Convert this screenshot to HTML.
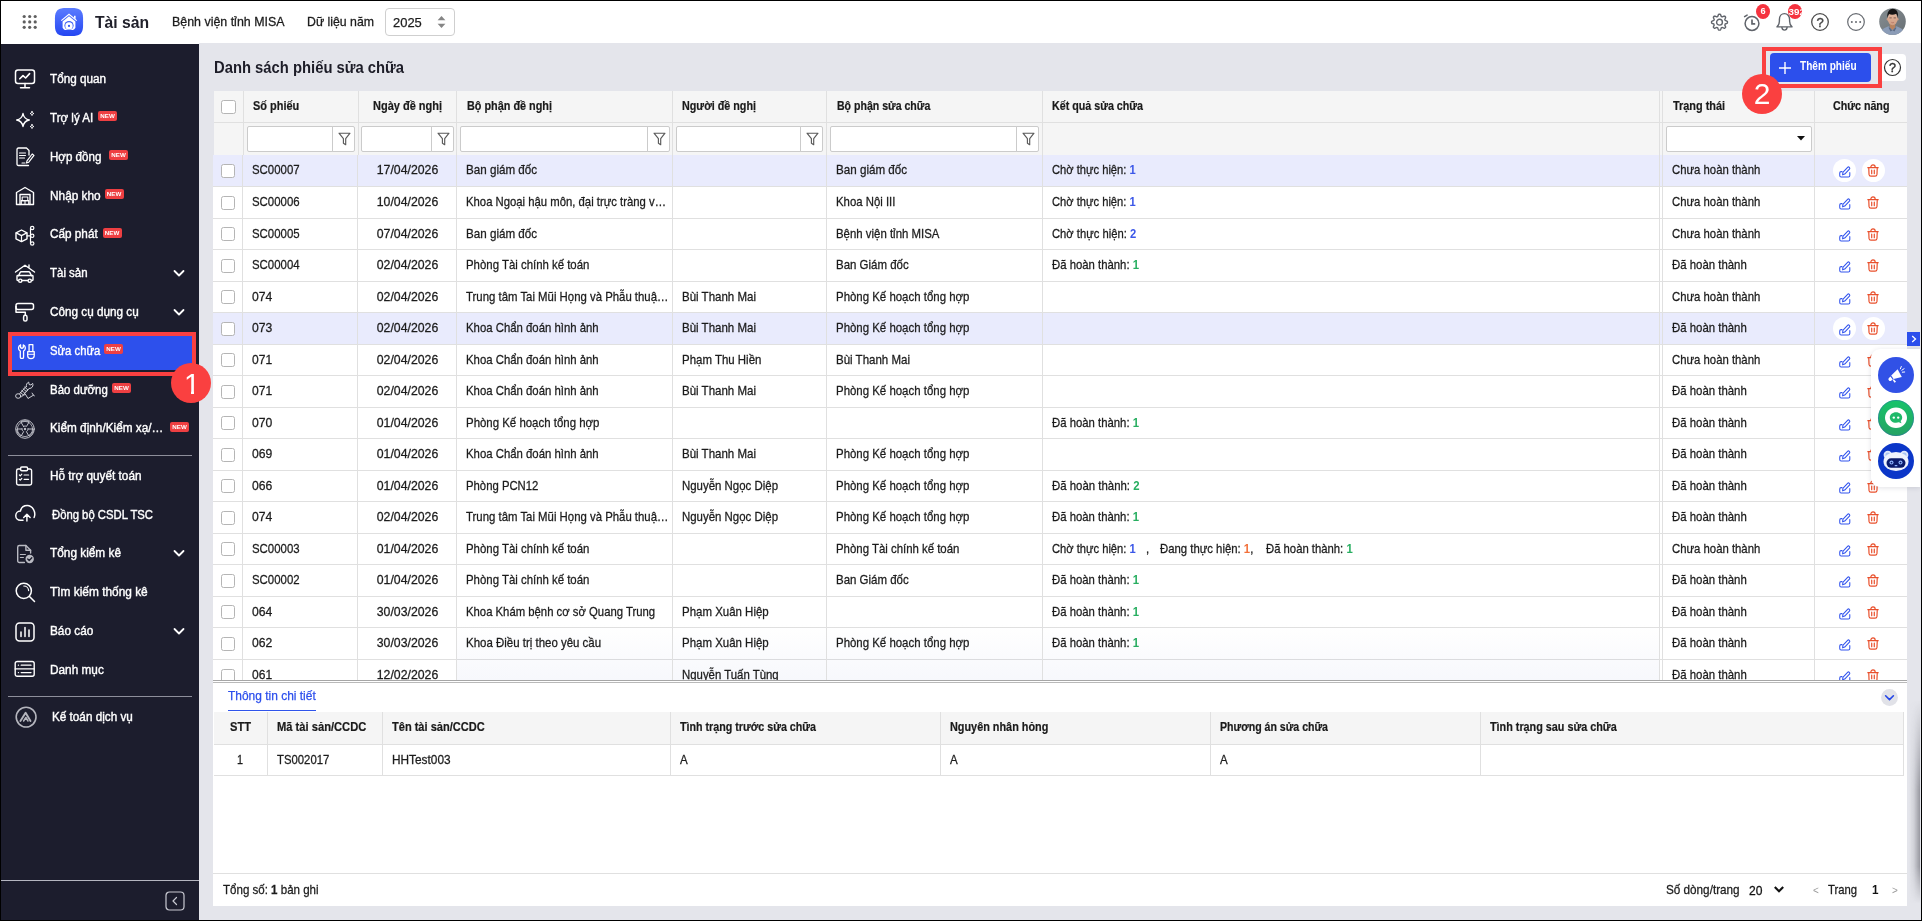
<!DOCTYPE html>
<html lang="vi"><head><meta charset="utf-8"><title>Danh sách phiếu sửa chữa</title>
<style>
*{box-sizing:border-box;margin:0;padding:0}
html,body{width:1922px;height:921px;overflow:hidden;background:#e4e5eb}
body{font-family:"Liberation Sans",sans-serif;font-size:13px;color:#1f1f1f;position:relative}
.abs{position:absolute}
.sx{display:inline-block;white-space:nowrap;transform-origin:0 50%}
.sxc{display:inline-block;white-space:nowrap;transform-origin:50% 50%}
svg{display:block;overflow:visible}
/* header */
#hdr{position:absolute;left:1px;top:1px;width:1920px;height:42px;background:#fff}
/* sidebar */
#side{position:absolute;left:1px;top:44px;width:198px;height:876px;background:#1c1d2d}
.mi{position:absolute;left:1px;width:198px;height:34px;color:#fff;font-size:12px;font-weight:normal;-webkit-text-stroke:.38px #fff}
.mi .ic{position:absolute;left:13px;top:6.8px;width:22px;height:22px}
.mi .tx{position:absolute;left:49px;top:0;line-height:34px;white-space:nowrap;transform:scaleX(.915);transform-origin:0 50%}
.new{position:absolute;width:19px;height:10px;border-radius:2px;background:#ee3f42;color:#fff;font-size:6.2px;line-height:10px;text-align:center;font-weight:bold}
.sep{position:absolute;left:8px;width:184px;height:1px;background:#8d8e9a}
/* table */
.th{position:absolute;top:91px;height:31px;line-height:30px;font-weight:bold;font-size:12px;color:#1a1a1a;-webkit-text-stroke:.2px #1a1a1a;white-space:nowrap}
.vl{position:absolute;width:1px;background:#e0e0e0}
.hl{position:absolute;height:1px;background:#e0e0e0}
.row{position:absolute;left:213px;width:1694px;background:#fff}
.row.sel{background:#e9ebfd}
.c{position:absolute;top:-1px;white-space:nowrap;color:#1c1c1c;-webkit-text-stroke:.28px #1c1c1c}
.c b{-webkit-text-stroke:0}
.cb{position:absolute;width:14px;height:14px;border:1px solid #b5b5b5;border-radius:2.5px;background:#fff}
.fin{position:absolute;top:126px;height:26px;background:#fff;border:1px solid #cbcbcb;border-radius:2px}
.fbtn{position:absolute;top:126px;height:26px;width:23px;background:#fff;border:1px solid #cbcbcb;border-radius:0 2px 2px 0}
.b{color:#3b57e8;font-weight:bold}.g{color:#27ae60;font-weight:bold}.o{color:#f2703a;font-weight:bold}
</style></head><body>
<!--HEADER-->
<div id="hdr"></div>
<svg class="abs" style="left:22px;top:14px" width="16" height="16" viewBox="0 0 16 16" fill="#5f5f5f"><circle cx="2.2" cy="2.5" r="1.6"/><circle cx="7.7" cy="2.5" r="1.6"/><circle cx="13.2" cy="2.5" r="1.6"/><circle cx="2.2" cy="7.9" r="1.6"/><circle cx="7.7" cy="7.9" r="1.6"/><circle cx="13.2" cy="7.9" r="1.6"/><circle cx="2.2" cy="13.3" r="1.6"/><circle cx="7.7" cy="13.3" r="1.6"/><circle cx="13.2" cy="13.3" r="1.6"/></svg>
<svg class="abs" style="left:55px;top:8px" width="28" height="28" viewBox="0 0 28 28"><defs><linearGradient id="lg1" x1="0" y1="0" x2="0" y2="1"><stop offset="0" stop-color="#5b7cff"/><stop offset="1" stop-color="#2446f2"/></linearGradient></defs><path d="M28.10 14.00 L28.07 17.63 L27.98 19.33 L27.83 20.65 L27.62 21.77 L27.35 22.74 L27.02 23.59 L26.62 24.35 L26.16 25.03 L25.63 25.63 L25.03 26.16 L24.35 26.62 L23.59 27.02 L22.74 27.35 L21.77 27.62 L20.65 27.83 L19.33 27.98 L17.63 28.07 L14.00 28.10 L10.37 28.07 L8.67 27.98 L7.35 27.83 L6.23 27.62 L5.26 27.35 L4.41 27.02 L3.65 26.62 L2.97 26.16 L2.37 25.63 L1.84 25.03 L1.38 24.35 L0.98 23.59 L0.65 22.74 L0.38 21.77 L0.17 20.65 L0.02 19.33 L-0.07 17.63 L-0.10 14.00 L-0.07 10.37 L0.02 8.67 L0.17 7.35 L0.38 6.23 L0.65 5.26 L0.98 4.41 L1.38 3.65 L1.84 2.97 L2.37 2.37 L2.97 1.84 L3.65 1.38 L4.41 0.98 L5.26 0.65 L6.23 0.38 L7.35 0.17 L8.67 0.02 L10.37 -0.07 L14.00 -0.10 L17.63 -0.07 L19.33 0.02 L20.65 0.17 L21.77 0.38 L22.74 0.65 L23.59 0.98 L24.35 1.38 L25.03 1.84 L25.63 2.37 L26.16 2.97 L26.62 3.65 L27.02 4.41 L27.35 5.26 L27.62 6.23 L27.83 7.35 L27.98 8.67 L28.07 10.37Z" fill="url(#lg1)"/><path d="M6.3 12.6 14 6.2l7.7 6.4" fill="none" stroke="#fff" stroke-width="1.2" stroke-linejoin="miter"/><path d="M7.6 13.6 14 8.3l6.4 5.3v6.1c-.6 1.2-1.6 2-2.6 2.4H10.2c-1-.4-2-1.2-2.6-2.4Z" fill="#fff"/><path d="M19 7.8h1.6v3.2L19 9.7Z" fill="#fff"/><circle cx="14" cy="17.6" r="4.6" fill="#3d60f6"/><circle cx="14" cy="17.9" r="3.7" fill="#fff"/><circle cx="14" cy="17.9" r="1.1" fill="#3357f3"/></svg>
<div class="abs" style="left:95px;top:11px;height:24px;line-height:24px;font-size:17px;font-weight:bold;color:#20202a"><span class="sx" style="transform:scaleX(.925)">Tài sản</span></div>
<div class="abs" style="left:171.7px;top:10px;height:24px;line-height:24px;font-size:13px;color:#1c1c1c;-webkit-text-stroke:.28px #1c1c1c"><span class="sx" style="transform:scaleX(.955)">Bệnh viện tỉnh MISA</span></div>
<div class="abs" style="left:306.8px;top:10px;height:24px;line-height:24px;font-size:13px;color:#1c1c1c;-webkit-text-stroke:.28px #1c1c1c"><span class="sx" style="transform:scaleX(.946)">Dữ liệu năm</span></div>
<div class="abs" style="left:385px;top:8px;width:70px;height:28px;border:1px solid #cfcfcf;border-radius:4px;background:#fff"></div>
<div class="abs" style="left:392.8px;top:10px;height:25px;line-height:25px;font-size:13.5px;color:#1c1c1c;-webkit-text-stroke:.25px #1c1c1c"><span class="sx" style="transform:scaleX(.96)">2025</span></div>
<svg class="abs" style="left:437px;top:15px" width="9" height="14" viewBox="0 0 9 14" fill="#858585"><path d="M.6 5.2 4.5 1 8.400 5.200Z"/><path d="M.600 8.800 4.500 13 8.400 8.800Z"/></svg>
<svg class="abs" style="left:1709px;top:12px" width="21" height="21" viewBox="0 0 21 21" fill="none" stroke="#60646b" stroke-width="1.4"><path d="M10.50 2.25 L10.81 2.26 L11.12 2.27 L11.42 2.45 L11.66 2.89 L11.86 3.38 L12.02 3.88 L12.16 4.33 L12.34 4.54 L12.56 4.62 L12.78 4.70 L12.99 4.80 L13.20 4.90 L13.48 4.88 L13.90 4.66 L14.36 4.42 L14.85 4.21 L15.33 4.07 L15.66 4.15 L15.90 4.36 L16.12 4.58 L16.34 4.80 L16.55 5.04 L16.63 5.37 L16.49 5.85 L16.28 6.34 L16.04 6.80 L15.82 7.22 L15.80 7.50 L15.90 7.71 L16.00 7.92 L16.08 8.14 L16.16 8.36 L16.37 8.54 L16.82 8.68 L17.32 8.84 L17.81 9.04 L18.25 9.28 L18.43 9.58 L18.44 9.89 L18.45 10.20 L18.44 10.51 L18.43 10.82 L18.25 11.12 L17.81 11.36 L17.32 11.56 L16.82 11.72 L16.37 11.86 L16.16 12.04 L16.08 12.26 L16.00 12.48 L15.90 12.69 L15.80 12.90 L15.82 13.18 L16.04 13.60 L16.28 14.06 L16.49 14.55 L16.63 15.03 L16.55 15.36 L16.34 15.60 L16.12 15.82 L15.90 16.04 L15.66 16.25 L15.33 16.33 L14.85 16.19 L14.36 15.98 L13.90 15.74 L13.48 15.52 L13.20 15.50 L12.99 15.60 L12.78 15.70 L12.56 15.78 L12.34 15.86 L12.16 16.07 L12.02 16.52 L11.86 17.02 L11.66 17.51 L11.42 17.95 L11.12 18.13 L10.81 18.14 L10.50 18.15 L10.19 18.14 L9.88 18.13 L9.58 17.95 L9.34 17.51 L9.14 17.02 L8.98 16.52 L8.84 16.07 L8.66 15.86 L8.44 15.78 L8.22 15.70 L8.01 15.60 L7.80 15.50 L7.52 15.52 L7.10 15.74 L6.64 15.98 L6.15 16.19 L5.67 16.33 L5.34 16.25 L5.10 16.04 L4.88 15.82 L4.66 15.60 L4.45 15.36 L4.37 15.03 L4.51 14.55 L4.72 14.06 L4.96 13.60 L5.18 13.18 L5.20 12.90 L5.10 12.69 L5.00 12.48 L4.92 12.26 L4.84 12.04 L4.63 11.86 L4.18 11.72 L3.68 11.56 L3.19 11.36 L2.75 11.12 L2.57 10.82 L2.56 10.51 L2.55 10.20 L2.56 9.89 L2.57 9.58 L2.75 9.28 L3.19 9.04 L3.68 8.84 L4.18 8.68 L4.63 8.54 L4.84 8.36 L4.92 8.14 L5.00 7.92 L5.10 7.71 L5.20 7.50 L5.18 7.22 L4.96 6.80 L4.72 6.34 L4.51 5.85 L4.37 5.37 L4.45 5.04 L4.66 4.80 L4.88 4.58 L5.10 4.36 L5.34 4.15 L5.67 4.07 L6.15 4.21 L6.64 4.42 L7.10 4.66 L7.52 4.88 L7.80 4.90 L8.01 4.80 L8.22 4.70 L8.44 4.62 L8.66 4.54 L8.84 4.33 L8.98 3.88 L9.14 3.38 L9.34 2.89 L9.58 2.45 L9.88 2.27 L10.19 2.26Z" stroke-linejoin="round"/><circle cx="10.5" cy="10.2" r="2.9"/></svg>
<svg class="abs" style="left:1742px;top:11.500px" width="20" height="22" viewBox="0 0 20 22" fill="none" stroke="#60646b" stroke-width="1.5" stroke-linecap="round"><circle cx="10" cy="11.5" r="6.9"/><path d="M10 8.200v3.700h2.500" stroke-width="1.700"/><path d="M2.6 4.6 5.1 3.1"/></svg>
<div class="abs" style="left:1756px;top:4px;width:14px;height:15px;border-radius:7px/7.5px;background:#f5333f;color:#fff;font-size:9.2px;line-height:15px;font-weight:bold;text-align:center">6</div>
<svg class="abs" style="left:1775px;top:12px" width="19" height="20" viewBox="0 0 19 20" fill="none" stroke="#60646b" stroke-width="1.4" stroke-linejoin="round" stroke-linecap="round"><path d="M2 14.9c1.7-1.4 2.4-3 2.4-5.6V7.6C4.4 4.2 6.6 1.6 9.5 1.6s5.1 2.6 5.1 6v1.7c0 2.6.7 4.2 2.4 5.6Z"/><path d="M6.900 15.400c.2 1.700 1.200 2.700 2.600 2.700s2.400-1 2.600-2.700"/></svg>
<div class="abs" style="left:1788px;top:4px;width:14px;height:15px;border-radius:7px/7.5px;background:#f5333f;color:#fff;font-size:9.2px;line-height:15px;font-weight:bold;text-align:center;overflow:hidden"><span style="display:block;text-align:left;margin-left:0.4px;letter-spacing:.1px;font-size:9.8px;white-space:nowrap">392</span></div>
<svg class="abs" style="left:1810px;top:12px" width="20" height="20" viewBox="0 0 20 20"><circle cx="10" cy="10" r="8.3" fill="none" stroke="#4d4d4d" stroke-width="1.3"/><text x="10" y="14.6" text-anchor="middle" font-family="Liberation Sans, sans-serif" font-size="13" fill="#444" stroke="#444" stroke-width=".4">?</text></svg>
<svg class="abs" style="left:1846px;top:12px" width="20" height="20" viewBox="0 0 20 20"><circle cx="10" cy="10" r="8.3" fill="none" stroke="#666a70" stroke-width="1.2"/><circle cx="5.8" cy="10" r="1" fill="#666a70"/><circle cx="10" cy="10" r="1" fill="#666a70"/><circle cx="14.2" cy="10" r="1" fill="#666a70"/></svg>
<svg class="abs" style="left:1879px;top:8.300px" width="27" height="27" viewBox="0 0 27 27"><defs><clipPath id="avc"><circle cx="13.500" cy="13.500" r="13.300"/></clipPath><linearGradient id="avg" x1="0" y1="0" x2="1" y2="1"><stop offset="0" stop-color="#868e92"/><stop offset="1" stop-color="#686f74"/></linearGradient><linearGradient id="avs" x1="0" y1="0" x2="0" y2="1"><stop offset="0" stop-color="#e3b8a0"/><stop offset="1" stop-color="#cf9d82"/></linearGradient></defs><g clip-path="url(#avc)"><rect width="27" height="27" fill="url(#avg)"/><path d="M1 27c.4-4.600 3.400-7.100 8.600-8.700l3.900 2.600 3.900-2.600c5.200 1.600 8.200 4.100 8.600 8.700Z" fill="#8b9cb7"/><path d="M10.800 16h5.400v3.400l-2.700 2.700-2.700-2.700Z" fill="#b8835f"/><path d="M10.500 19.200l3 3.300 3-3.300 1 .5-2.100 3.800-1.900-1.200-1.900 1.200-2.100-3.800Z" fill="#5d6b84"/><ellipse cx="13.600" cy="10.900" rx="5" ry="6.300" fill="url(#avs)"/><ellipse cx="8.500" cy="11.300" rx=".800" ry="1.300" fill="#d1a087"/><ellipse cx="18.700" cy="11.300" rx=".800" ry="1.300" fill="#d1a087"/><path d="M8.400 10.300C7.600 4.700 10 .700 13.800.700c3.800 0 6 3.600 5.100 9.600-.3-2.300-.9-3.700-1.700-4.500-2.200 1-5.200 1.100-7 .3-.9.900-1.500 2.300-1.800 4.200Z" fill="#171616"/><path d="M10.400 9.900h2.300M14.600 9.900h2.300" stroke="#5a4036" stroke-width=".700"/><path d="M12.300 14.400q1.300.6 2.600 0" stroke="#a9665a" stroke-width=".600" fill="none"/></g></svg>
<!--SIDEBAR-->
<div id="side"></div>
<div class="abs" style="left:1px;top:43px;width:198px;height:1px;background:#fff"></div>
<div class="abs" style="left:12px;top:336px;width:180px;height:34px;background:#2d50ec"></div>
<div class="mi" style="top:61.5px"><svg class="ic" viewBox="0 0 22 22"><g fill="none" stroke="#fff" stroke-linecap="round" stroke-linejoin="round" stroke-width="1.500"><rect x="1.5" y="2" width="19" height="13.5" rx="2.5"/><path d="M11 15.500v4M6.500 19.800h9"/><path d="M5.800 10.800 9 7.600l2.600 2.400 4-4.400" stroke-width="1.600"/></g></svg><span class="tx" style="left:48.9px;transform:scaleX(0.9758)">Tổng quan</span></div>
<div class="mi" style="top:101.2px"><svg class="ic" style="top:7.4px" viewBox="0 0 22 22"><g fill="none" stroke="#fff" stroke-linecap="round" stroke-linejoin="round" stroke-width="1.400"><path d="M9 4.500c.7 4 2.300 5.800 6.300 6.500-4 .7-5.600 2.500-6.300 6.500-.7-4-2.300-5.800-6.300-6.500 4-.7 5.600-2.500 6.300-6.500Z"/><path d="M18 2.500c.2 1.300.700 1.800 2 2-1.300.2-1.800.700-2 2-.2-1.300-.7-1.800-2-2 1.300-.2 1.800-.7 2-2ZM18 15.500c.2 1.300.700 1.800 2 2-1.300.2-1.800.700-2 2-.2-1.300-.7-1.800-2-2 1.300-.2 1.800-.7 2-2Z" stroke-width="1"/></g></svg><span class="tx" style="left:48.9px;transform:scaleX(0.965)">Trợ lý AI</span></div>
<div class="new" style="left:98px;top:111.2px">NEW</div>
<div class="mi" style="top:140.1px"><svg class="ic" style="top:6.0px" viewBox="0 0 22 22"><g fill="none" stroke="#fff" stroke-linecap="round" stroke-linejoin="round" stroke-width="1.300"><path d="M14.500 19.500H4.500c-1 0-1.500-.5-1.500-1.500V3.500C3 2.500 3.500 2 4.500 2h8L15 4.500V9"/><path d="M5.500 7h6M5.500 9.500h6M5.500 12h5M8 17h3" stroke-width="1.100"/><path d="M13 14.800 18.200 8l1.800 1.400-5.200 6.800-2.300.8Z" stroke-width="1.200"/></g></svg><span class="tx" style="left:48.9px;transform:scaleX(0.9653)">Hợp đồng</span></div>
<div class="new" style="left:109px;top:150.1px">NEW</div>
<div class="mi" style="top:179.2px"><svg class="ic" style="top:5.9px" viewBox="0 0 22 22"><g fill="none" stroke="#fff" stroke-linecap="round" stroke-linejoin="round" stroke-width="1.400"><path d="M2.500 19.500V7.500L11 2.500l8.500 5v12Z"/><path d="M6 19.500V9.500h10v10"/><rect x="8.200" y="12" width="5.600" height="3.600" stroke-width="1.100"/><path d="M7.300 19.500v-3.900h3.700v3.900M11 19.500v-3.900h3.700v3.900" stroke-width="1.100"/></g></svg><span class="tx" style="left:48.9px;transform:scaleX(0.9869)">Nhập kho</span></div>
<div class="new" style="left:104.5px;top:189.0px">NEW</div>
<div class="mi" style="top:217.2px"><svg class="ic" viewBox="0 0 22 22"><g fill="none" stroke="#fff" stroke-linecap="round" stroke-linejoin="round" stroke-width="1.400"><path d="M7.500 6 13 8.800v6L7.500 17.600 2 14.800v-6Z"/><path d="M2.200 8.900 7.500 11.600l5.300-2.700M7.500 11.600v5.800" stroke-width="1.200"/><path d="M13 11.800h3.500M16.500 4v15.500" stroke-width="1.200"/><circle cx="18.200" cy="4" r="1.700" stroke-width="1.200"/><circle cx="18.200" cy="11.800" r="1.700" stroke-width="1.200"/><circle cx="18.200" cy="19.500" r="1.700" stroke-width="1.200"/></g></svg><span class="tx" style="left:48.9px;transform:scaleX(0.9794)">Cấp phát</span></div>
<div class="new" style="left:102.5px;top:228.0px">NEW</div>
<div class="mi" style="top:255.6px"><svg class="ic" viewBox="0 0 22 22"><g fill="none" stroke="#fff" stroke-linecap="round" stroke-linejoin="round" stroke-width="1.400"><path d="M1.500 10 11 3.200 20.500 10M15 3v3"/><path d="M4.500 13.800 6.200 10.400c.2-.5.600-.7 1.100-.7h7.400c.5 0 .9.200 1.100.7l1.700 3.400"/><path d="M3 14.200c0-.4.300-.7.700-.7h14.600c.4 0 .7.300.7.700v3.600c0 .4-.3.700-.7.700H3.700c-.4 0-.7-.3-.7-.7Z"/><circle cx="6.300" cy="18.700" r="1.600" fill="#1c1d2d"/><circle cx="15.700" cy="18.700" r="1.600" fill="#1c1d2d"/></g></svg><span class="tx" style="left:48.9px;transform:scaleX(0.9553)">Tài sản</span><svg class="abs" style="left:172px;top:13.200px" width="12" height="9" viewBox="0 0 12 9" fill="none" stroke="#fff" stroke-width="1.800" stroke-linecap="round" stroke-linejoin="round"><path d="M1.500 2 6 6.500 10.500 2"/></svg></div>
<div class="mi" style="top:294.5px"><svg class="ic" viewBox="0 0 22 22"><g fill="none" stroke="#fff" stroke-linecap="round" stroke-linejoin="round" stroke-width="1.500"><rect x="2" y="2.500" width="17.500" height="6" rx="2"/><path d="M2 5.500v5.800h9.300v3"/><rect x="9.600" y="14.300" width="3.400" height="5.800" rx="1.700"/></g></svg><span class="tx" style="left:48.9px;transform:scaleX(0.9776)">Công cụ dụng cụ</span><svg class="abs" style="left:172px;top:13.200px" width="12" height="9" viewBox="0 0 12 9" fill="none" stroke="#fff" stroke-width="1.800" stroke-linecap="round" stroke-linejoin="round"><path d="M1.500 2 6 6.500 10.500 2"/></svg></div>
<div class="mi" style="top:333.6px"><svg class="ic" viewBox="0 0 22 22"><g fill="none" stroke="#fff" stroke-linecap="round" stroke-linejoin="round" stroke-width="1.500" transform="translate(3.2 1.6) scale(.86)"><path d="M5 19.500c-.9 0-1.400-.5-1.400-1.400V11C2.300 10.300 1.500 9 1.500 7.400c0-1.700 1-3.200 2.400-3.700V7l1.600.8L7.100 7V3.700c1.400.5 2.400 2 2.400 3.700 0 1.600-.8 2.900-2.100 3.600v7.100c0 .9-.5 1.400-1.400 1.400Z"/><path d="M13.800 3.400h4.400v8.200h-4.400ZM12.200 11.600h7.600v4.800c0 1.900-1.500 3.300-3.800 3.300s-3.800-1.400-3.800-3.300Z"/><path d="M12.300 14.800h7.400" stroke-width="1.100"/></g></svg><span class="tx" style="left:48.9px;transform:scaleX(0.9413)">Sửa chữa</span></div>
<div class="new" style="left:104px;top:344.4px">NEW</div>
<div class="mi" style="top:372.5px"><svg class="ic" viewBox="0 0 22 22"><g fill="none" stroke-linecap="round" stroke-linejoin="round" stroke="#d4d5dc" stroke-width=".950"><ellipse cx="4.200" cy="17" rx="2.600" ry="2.300"/><path d="M5.500 15 12 7.500M7.500 18 14 10.500M6.200 13.200l3 2.600M7.700 11.500l3 2.600M9.200 9.800l3 2.600M10.600 8.100l3 2.600"/><path d="M12.500 7.800c-.6-2 .3-3.900 2.200-4.700l.4 2.400 1.900.5 1.600-1.700c.8 1.800.2 3.900-1.600 4.800-.7.300-1.300.4-2 .3l-2.400 3.100"/><path d="M11.400 15.200l2.600 4.300 5.400-3.300-1.300-2.100M11.400 15.200l-1.600 1M19.400 16.200l1 .6" /></g></svg><span class="tx" style="left:48.9px;transform:scaleX(0.9536)">Bảo dưỡng</span></div>
<div class="new" style="left:112px;top:383.3px">NEW</div>
<div class="mi" style="top:411.4px"><svg class="ic" viewBox="0 0 22 22"><g fill="none" stroke-linecap="round" stroke-linejoin="round" stroke="#c2c3cb" stroke-width="1"><circle cx="11" cy="11" r="9.300"/><circle cx="11" cy="11" r="7.600" stroke-width=".8"/><circle cx="11" cy="11" r="1.200" fill="#c2c3cb" stroke="none"/><path d="M9.500 8.400 6.800 3.900c2.600-1.400 5.800-1.400 8.400 0L12.500 8.400c-1-.5-2-.5-3 0ZM14 11h5.200c0 3-1.600 5.700-4.200 7.200l-2.600-4.500c1-.6 1.600-1.600 1.600-2.700ZM8 11H2.800c0 3 1.600 5.700 4.200 7.200l2.600-4.500C8.600 13.100 8 12.100 8 11Z" stroke-width="1"/></g></svg><span class="tx" style="left:48.9px;transform:scaleX(0.9819)">Kiểm định/Kiểm xạ/…</span></div>
<div class="new" style="left:170px;top:422.2px">NEW</div>
<div class="mi" style="top:458.5px"><svg class="ic" viewBox="0 0 22 22"><g fill="none" stroke="#fff" stroke-linecap="round" stroke-linejoin="round" stroke-width="1.400" transform="translate(-.9 0)"><path d="M7.500 4H5.200C4.200 4 3.500 4.700 3.500 5.700v12.600c0 1 .7 1.700 1.700 1.700h11.600c1 0 1.700-.7 1.700-1.700V5.700c0-1-.7-1.700-1.700-1.700H14.500"/><rect x="7.500" y="2" width="7" height="3.800" rx="1.200"/><path d="M6.300 10l.9.900 1.500-1.700M11 10h4.500M6.300 14.300l.9.900 1.500-1.700M11 14.300h4.500" stroke-width="1.200"/></g></svg><span class="tx" style="left:48.9px;transform:scaleX(0.9811)">Hỗ trợ quyết toán</span></div>
<div class="mi" style="top:498.0px"><svg class="ic" viewBox="0 0 22 22"><g fill="none" stroke="#fff" stroke-linecap="round" stroke-linejoin="round" stroke-width="1.500" transform="translate(.3 -.4) scale(.97)"><path d="M20.400 13.300C22.600 8.300 19.200 1 13.300 1 9.600 1 7 3.400 6.300 6.700 3.400 6.900 1.500 9.100 1.500 11.500c0 2.700 2.100 4.700 4.800 4.700H9"/><path d="M13 16.900V10M9.700 13.200 13 9.900l3.300 3.300"/></g></svg><span class="tx" style="left:51.4px;transform:scaleX(0.9405)">Đồng bộ CSDL TSC</span></div>
<div class="mi" style="top:535.7px"><svg class="ic" viewBox="0 0 22 22"><g fill="none" stroke="#b9bac2" stroke-width="1.400" stroke-linecap="round" stroke-linejoin="round" transform="translate(.4 1)"><path d="M10 19.500H5c-1 0-1.700-.7-1.700-1.700V4.200c0-1 .7-1.700 1.700-1.700h6.500l4.700 4.700V10"/><path d="M11.500 2.500v4.700h4.700"/><path d="M6 11.500h5M6 14.500h3" stroke-width="1.200"/><circle cx="15.300" cy="16" r="4.200" fill="#b9bac2" stroke="none"/><path d="M13.300 16l1.500 1.500 2.600-2.800" stroke="#1c1d2d" stroke-width="1.300"/></g></svg><span class="tx" style="left:48.9px;transform:scaleX(0.9857)">Tổng kiểm kê</span><svg class="abs" style="left:172px;top:13.200px" width="12" height="9" viewBox="0 0 12 9" fill="none" stroke="#fff" stroke-width="1.800" stroke-linecap="round" stroke-linejoin="round"><path d="M1.500 2 6 6.500 10.500 2"/></svg></div>
<div class="mi" style="top:574.5px"><svg class="ic" viewBox="0 0 22 22"><g fill="none" stroke="#fff" stroke-linecap="round" stroke-linejoin="round" stroke-width="1.500"><circle cx="9.800" cy="9.800" r="7.600"/><path d="M15.500 15.500l5 5"/><path d="M9.800 5c2.600 0 4.700 2 4.800 4.600" stroke-width="1.200"/></g></svg><span class="tx" style="left:48.9px;transform:scaleX(0.9898)">Tìm kiếm thống kê</span></div>
<div class="mi" style="top:614.0px"><svg class="ic" viewBox="0 0 22 22"><g fill="none" stroke="#fff" stroke-linecap="round" stroke-linejoin="round" stroke-width="1.500"><rect x="2" y="2" width="18" height="18" rx="3.500"/><path d="M7 15.500v-4.500M11 15.500V6.500M15 15.500v-6.500"/></g></svg><span class="tx" style="left:48.9px;transform:scaleX(0.983)">Báo cáo</span><svg class="abs" style="left:172px;top:13.200px" width="12" height="9" viewBox="0 0 12 9" fill="none" stroke="#fff" stroke-width="1.800" stroke-linecap="round" stroke-linejoin="round"><path d="M1.500 2 6 6.500 10.500 2"/></svg></div>
<div class="mi" style="top:653.0px"><svg class="ic" viewBox="0 0 22 22"><g fill="none" stroke="#fff" stroke-linecap="round" stroke-linejoin="round" stroke-width="1.400"><rect x="1.200" y="1.500" width="19" height="14.800" rx="2"/><path d="M1.200 8.900h19"/><path d="M4.400 5.200h.1M7.200 5.200h9.800M4.400 12.600h.1M7.200 12.600h9.800" stroke-width="1.300"/></g></svg><span class="tx" style="left:48.9px;transform:scaleX(0.9835)">Danh mục</span></div>
<div class="mi" style="top:699.5px"><svg class="ic" viewBox="0 0 22 22"><g fill="none" stroke="#b4b5bd" stroke-width="1.600" stroke-linecap="round" stroke-linejoin="round"><circle cx="12.100" cy="11.100" r="9.900"/><path d="M6.400 15 11.600 6.800l4.900 8.200" stroke-width="1.900"/><path d="M9.600 15l2.300-3.500 2.100 3.500" stroke-width="1.500"/></g></svg><span class="tx" style="left:50.9px;transform:scaleX(0.9766)">Kế toán dịch vụ</span></div>
<div class="sep" style="top:455px"></div>
<div class="sep" style="top:696px"></div>
<div class="abs" style="left:1px;top:880px;width:198px;height:1px;background:#b5b6c0"></div>
<svg class="abs" style="left:165px;top:891px" width="20" height="20" viewBox="0 0 20 20" fill="none" stroke="#c9cad2" stroke-width="1.200" stroke-linecap="round" stroke-linejoin="round"><rect x="1" y="1" width="18" height="18" rx="3.500"/><path d="M11.500 6.500 8 10l3.500 3.500"/></svg>
<!--CONTENT TOP-->
<div class="abs" style="left:213.500px;top:56px;height:24px;line-height:24px;font-size:16px;font-weight:bold;color:#1d1d28"><span class="sx" style="transform:scaleX(.925)">Danh sách phiếu sửa chữa</span></div>
<div class="abs" style="left:1879px;top:54px;width:27px;height:27px;background:#fff;border-radius:4px"></div>
<svg class="abs" style="left:1883px;top:58px" width="19" height="19" viewBox="0 0 19 19"><circle cx="9.500" cy="9.500" r="8" fill="none" stroke="#333" stroke-width="1.200"/><text x="9.500" y="13.800" text-anchor="middle" font-family="Liberation Sans, sans-serif" font-size="12.500" fill="#333" stroke="#333" stroke-width=".4">?</text></svg>
<div class="abs" style="left:1770px;top:53px;width:101px;height:29px;background:#2c4fec;border-radius:4px"></div>
<svg class="abs" style="left:1779px;top:61.500px" width="12" height="12" viewBox="0 0 12 12" stroke="#fff" stroke-width="1.400" fill="none"><path d="M6 0v12M0 6h12"/></svg>
<div class="abs" style="left:1800px;top:55px;height:22px;line-height:22px;font-size:12px;font-weight:bold;color:#fff"><span class="sx" style="transform:scaleX(.84)">Thêm phiếu</span></div>
<!--TABLE-->
<div class="abs" style="left:214px;top:91px;width:1693px;height:64px;background:#f5f5f5"></div>
<div class="hl" style="left:214px;top:122px;width:1693px"></div>
<div class="th" style="left:252.8px"><span class="sx" style="transform:scaleX(0.9117)">Số phiếu</span></div>
<div class="th" style="left:373.0px"><span class="sx" style="transform:scaleX(0.9158)">Ngày đề nghị</span></div>
<div class="th" style="left:466.6px"><span class="sx" style="transform:scaleX(0.9043)">Bộ phận đề nghị</span></div>
<div class="th" style="left:682.4px"><span class="sx" style="transform:scaleX(0.8965)">Người đề nghị</span></div>
<div class="th" style="left:836.6px"><span class="sx" style="transform:scaleX(0.8795)">Bộ phận sửa chữa</span></div>
<div class="th" style="left:1052.2px"><span class="sx" style="transform:scaleX(0.8915)">Kết quả sửa chữa</span></div>
<div class="th" style="left:1672.9px"><span class="sx" style="transform:scaleX(0.9068)">Trạng thái</span></div>
<div class="th" style="left:1832.8px"><span class="sx" style="transform:scaleX(0.8902)">Chức năng</span></div>
<div class="cb" style="left:221px;top:100px;width:15px"></div>
<div class="fin" style="left:247px;width:87px;border-radius:2px 0 0 2px"></div><div class="fbtn" style="left:332px"></div><svg class="abs" style="left:337.5px;top:132px" width="13" height="14" viewBox="0 0 13 14" fill="none" stroke="#5a5a5a" stroke-width="1.150" stroke-linejoin="round"><path d="M1 1.200h11L7.700 6.700v6L5.400 11.200V6.700Z"/></svg>
<div class="fin" style="left:361px;width:72px;border-radius:2px 0 0 2px"></div><div class="fbtn" style="left:431px"></div><svg class="abs" style="left:436.5px;top:132px" width="13" height="14" viewBox="0 0 13 14" fill="none" stroke="#5a5a5a" stroke-width="1.150" stroke-linejoin="round"><path d="M1 1.200h11L7.700 6.700v6L5.400 11.200V6.700Z"/></svg>
<div class="fin" style="left:460px;width:189px;border-radius:2px 0 0 2px"></div><div class="fbtn" style="left:647px"></div><svg class="abs" style="left:652.5px;top:132px" width="13" height="14" viewBox="0 0 13 14" fill="none" stroke="#5a5a5a" stroke-width="1.150" stroke-linejoin="round"><path d="M1 1.200h11L7.700 6.700v6L5.400 11.200V6.700Z"/></svg>
<div class="fin" style="left:676px;width:126px;border-radius:2px 0 0 2px"></div><div class="fbtn" style="left:800px"></div><svg class="abs" style="left:805.5px;top:132px" width="13" height="14" viewBox="0 0 13 14" fill="none" stroke="#5a5a5a" stroke-width="1.150" stroke-linejoin="round"><path d="M1 1.200h11L7.700 6.700v6L5.400 11.200V6.700Z"/></svg>
<div class="fin" style="left:830px;width:188px;border-radius:2px 0 0 2px"></div><div class="fbtn" style="left:1016px"></div><svg class="abs" style="left:1021.5px;top:132px" width="13" height="14" viewBox="0 0 13 14" fill="none" stroke="#5a5a5a" stroke-width="1.150" stroke-linejoin="round"><path d="M1 1.200h11L7.700 6.700v6L5.400 11.200V6.700Z"/></svg>
<div class="fin" style="left:1666px;width:146px"></div>
<svg class="abs" style="left:1797px;top:136px" width="8" height="5" viewBox="0 0 8 5"><path d="M0 0h8L4 4.500Z" fill="#111"/></svg>
<div class="row sel" style="top:155px;height:32px;line-height:31.5px;overflow:hidden"><div class="cb" style="left:8px;top:9px"></div><div class="c" style="left:38.5px"><span class="sx" style="transform:scaleX(0.8779)">SC00007</span></div><div class="c" style="left:145.5px;width:98px;text-align:center"><span class="sxc" style="transform:scaleX(.945)">17/04/2026</span></div><div class="c" style="left:252.8px"><span class="sx" style="transform:scaleX(0.8943)">Ban giám đốc</span></div><div class="c" style="left:622.8px"><span class="sx" style="transform:scaleX(0.8943)">Ban giám đốc</span></div><div class="c" style="left:838.5px"><span class="sx" style="transform:scaleX(0.8589)">Chờ thực hiện: <b class=b>1</b></span></div><div class="c" style="left:1459.4px"><span class="sx" style="transform:scaleX(0.8722)">Chưa hoàn thành</span></div><div class="abs" style="left:1620px;top:4px;width:23px;height:23px;border-radius:12px;background:#fff"></div><div class="abs" style="left:1648.5px;top:4px;width:23px;height:23px;border-radius:12px;background:#fff"></div><svg class="abs" style="left:1625.8px;top:10.5px" width="12" height="12" viewBox="0 0 13 13" fill="none" stroke="#3355ee" stroke-width="1.150" stroke-linejoin="round" stroke-linecap="round"><path d="M3.300 6.100H2.300C1.400 6.100.800 6.700.800 7.600v2.800c0 .9.600 1.500 1.500 1.500h7.900c.9 0 1.500-.600 1.500-1.500V7.200"/><path d="M3.900 9.600 4.200 7 9.300 1.500c.5-.55 1.350-.55 1.900-.05s.6 1.350.1 1.900L6.200 8.800Z"/></svg>
<svg class="abs" style="left:1654.2px;top:9.3px" width="12" height="13" viewBox="0 0 13 14" fill="none" stroke="#e9502c" stroke-width="1.300" stroke-linejoin="round" stroke-linecap="round"><path d="M.900 3.900h11.200"/><path d="M4.100 3.700C4.100 2 5.100.900 6.500.900S8.900 2 8.900 3.700"/><path d="M1.900 4.100l.3 7.100c.1 1.200.8 1.900 2 1.900h4.600c1.200 0 1.900-.7 2-1.900l.3-7.100"/><path d="M5.100 6.600v3.800M7.900 6.600v3.800"/></svg>
<div class="hl" style="left:0;top:31px;width:1694px"></div></div>
<div class="row" style="top:187px;height:32px;line-height:31.5px;overflow:hidden"><div class="cb" style="left:8px;top:9px"></div><div class="c" style="left:38.5px"><span class="sx" style="transform:scaleX(0.8779)">SC00006</span></div><div class="c" style="left:145.5px;width:98px;text-align:center"><span class="sxc" style="transform:scaleX(.945)">10/04/2026</span></div><div class="c" style="left:252.8px"><span class="sx" style="transform:scaleX(0.8702)">Khoa Ngoại hậu môn, đại trực tràng v…</span></div><div class="c" style="left:622.8px"><span class="sx" style="transform:scaleX(0.8743)">Khoa Nội III</span></div><div class="c" style="left:838.5px"><span class="sx" style="transform:scaleX(0.8589)">Chờ thực hiện: <b class=b>1</b></span></div><div class="c" style="left:1459.4px"><span class="sx" style="transform:scaleX(0.8722)">Chưa hoàn thành</span></div><svg class="abs" style="left:1625.8px;top:10.5px" width="12" height="12" viewBox="0 0 13 13" fill="none" stroke="#3355ee" stroke-width="1.150" stroke-linejoin="round" stroke-linecap="round"><path d="M3.300 6.100H2.300C1.400 6.100.800 6.700.800 7.600v2.800c0 .9.600 1.500 1.500 1.500h7.900c.9 0 1.500-.600 1.500-1.500V7.200"/><path d="M3.900 9.600 4.200 7 9.300 1.500c.5-.55 1.350-.55 1.900-.05s.6 1.350.1 1.900L6.200 8.800Z"/></svg>
<svg class="abs" style="left:1654.2px;top:9.3px" width="12" height="13" viewBox="0 0 13 14" fill="none" stroke="#e9502c" stroke-width="1.300" stroke-linejoin="round" stroke-linecap="round"><path d="M.900 3.900h11.200"/><path d="M4.100 3.700C4.100 2 5.100.900 6.500.900S8.900 2 8.900 3.700"/><path d="M1.900 4.100l.3 7.100c.1 1.200.8 1.900 2 1.900h4.600c1.200 0 1.900-.7 2-1.900l.3-7.100"/><path d="M5.100 6.600v3.800M7.900 6.600v3.800"/></svg>
<div class="hl" style="left:0;top:31px;width:1694px"></div></div>
<div class="row" style="top:219px;height:31px;line-height:31.5px;overflow:hidden"><div class="cb" style="left:8px;top:8px"></div><div class="c" style="left:38.5px"><span class="sx" style="transform:scaleX(0.8779)">SC00005</span></div><div class="c" style="left:145.5px;width:98px;text-align:center"><span class="sxc" style="transform:scaleX(.945)">07/04/2026</span></div><div class="c" style="left:252.8px"><span class="sx" style="transform:scaleX(0.8943)">Ban giám đốc</span></div><div class="c" style="left:622.8px"><span class="sx" style="transform:scaleX(0.8778)">Bệnh viện tỉnh MISA</span></div><div class="c" style="left:838.5px"><span class="sx" style="transform:scaleX(0.864)">Chờ thực hiện: <b class=b>2</b></span></div><div class="c" style="left:1459.4px"><span class="sx" style="transform:scaleX(0.8722)">Chưa hoàn thành</span></div><svg class="abs" style="left:1625.8px;top:10.5px" width="12" height="12" viewBox="0 0 13 13" fill="none" stroke="#3355ee" stroke-width="1.150" stroke-linejoin="round" stroke-linecap="round"><path d="M3.300 6.100H2.300C1.400 6.100.800 6.700.800 7.600v2.800c0 .9.600 1.500 1.500 1.500h7.900c.9 0 1.500-.600 1.500-1.500V7.200"/><path d="M3.900 9.600 4.200 7 9.300 1.500c.5-.55 1.350-.55 1.900-.05s.6 1.350.1 1.900L6.200 8.800Z"/></svg>
<svg class="abs" style="left:1654.2px;top:9.3px" width="12" height="13" viewBox="0 0 13 14" fill="none" stroke="#e9502c" stroke-width="1.300" stroke-linejoin="round" stroke-linecap="round"><path d="M.900 3.900h11.200"/><path d="M4.100 3.700C4.100 2 5.100.900 6.500.900S8.900 2 8.900 3.700"/><path d="M1.900 4.100l.3 7.100c.1 1.200.8 1.900 2 1.900h4.600c1.200 0 1.900-.7 2-1.900l.3-7.100"/><path d="M5.100 6.600v3.800M7.900 6.600v3.800"/></svg>
<div class="hl" style="left:0;top:30px;width:1694px"></div></div>
<div class="row" style="top:250px;height:32px;line-height:31.5px;overflow:hidden"><div class="cb" style="left:8px;top:9px"></div><div class="c" style="left:38.5px"><span class="sx" style="transform:scaleX(0.8779)">SC00004</span></div><div class="c" style="left:145.5px;width:98px;text-align:center"><span class="sxc" style="transform:scaleX(.945)">02/04/2026</span></div><div class="c" style="left:252.8px"><span class="sx" style="transform:scaleX(0.877)">Phòng Tài chính kế toán</span></div><div class="c" style="left:622.8px"><span class="sx" style="transform:scaleX(0.8825)">Ban Giám đốc</span></div><div class="c" style="left:838.5px"><span class="sx" style="transform:scaleX(0.872)">Đã hoàn thành: <b class=g>1</b></span></div><div class="c" style="left:1459.4px"><span class="sx" style="transform:scaleX(0.8769)">Đã hoàn thành</span></div><svg class="abs" style="left:1625.8px;top:10.5px" width="12" height="12" viewBox="0 0 13 13" fill="none" stroke="#3355ee" stroke-width="1.150" stroke-linejoin="round" stroke-linecap="round"><path d="M3.300 6.100H2.300C1.400 6.100.800 6.700.800 7.600v2.800c0 .9.600 1.500 1.500 1.500h7.900c.9 0 1.500-.600 1.500-1.500V7.200"/><path d="M3.900 9.600 4.200 7 9.300 1.500c.5-.55 1.350-.55 1.900-.05s.6 1.350.1 1.900L6.200 8.800Z"/></svg>
<svg class="abs" style="left:1654.2px;top:9.3px" width="12" height="13" viewBox="0 0 13 14" fill="none" stroke="#e9502c" stroke-width="1.300" stroke-linejoin="round" stroke-linecap="round"><path d="M.900 3.900h11.200"/><path d="M4.100 3.700C4.100 2 5.100.900 6.500.900S8.900 2 8.900 3.700"/><path d="M1.900 4.100l.3 7.100c.1 1.200.8 1.900 2 1.900h4.600c1.200 0 1.900-.7 2-1.900l.3-7.100"/><path d="M5.100 6.600v3.800M7.900 6.600v3.800"/></svg>
<div class="hl" style="left:0;top:31px;width:1694px"></div></div>
<div class="row" style="top:282px;height:31px;line-height:31.5px;overflow:hidden"><div class="cb" style="left:8px;top:8px"></div><div class="c" style="left:38.5px"><span class="sx" style="transform:scaleX(0.9353)">074</span></div><div class="c" style="left:145.5px;width:98px;text-align:center"><span class="sxc" style="transform:scaleX(.945)">02/04/2026</span></div><div class="c" style="left:252.8px"><span class="sx" style="transform:scaleX(0.8753)">Trung tâm Tai Mũi Họng và Phẫu thuậ…</span></div><div class="c" style="left:468.5px"><span class="sx" style="transform:scaleX(0.8852)">Bùi Thanh Mai</span></div><div class="c" style="left:622.8px"><span class="sx" style="transform:scaleX(0.8796)">Phòng Kế hoạch tổng hợp</span></div><div class="c" style="left:1459.4px"><span class="sx" style="transform:scaleX(0.8722)">Chưa hoàn thành</span></div><svg class="abs" style="left:1625.8px;top:10.5px" width="12" height="12" viewBox="0 0 13 13" fill="none" stroke="#3355ee" stroke-width="1.150" stroke-linejoin="round" stroke-linecap="round"><path d="M3.300 6.100H2.300C1.400 6.100.800 6.700.800 7.600v2.800c0 .9.600 1.500 1.500 1.500h7.900c.9 0 1.500-.600 1.500-1.500V7.200"/><path d="M3.900 9.600 4.200 7 9.300 1.500c.5-.55 1.350-.55 1.900-.05s.6 1.350.1 1.900L6.200 8.800Z"/></svg>
<svg class="abs" style="left:1654.2px;top:9.3px" width="12" height="13" viewBox="0 0 13 14" fill="none" stroke="#e9502c" stroke-width="1.300" stroke-linejoin="round" stroke-linecap="round"><path d="M.900 3.900h11.200"/><path d="M4.100 3.700C4.100 2 5.100.900 6.500.900S8.900 2 8.900 3.700"/><path d="M1.900 4.100l.3 7.100c.1 1.200.8 1.900 2 1.900h4.600c1.200 0 1.900-.7 2-1.900l.3-7.100"/><path d="M5.100 6.600v3.800M7.900 6.600v3.800"/></svg>
<div class="hl" style="left:0;top:30px;width:1694px"></div></div>
<div class="row sel" style="top:313px;height:32px;line-height:31.5px;overflow:hidden"><div class="cb" style="left:8px;top:9px"></div><div class="c" style="left:38.5px"><span class="sx" style="transform:scaleX(0.9353)">073</span></div><div class="c" style="left:145.5px;width:98px;text-align:center"><span class="sxc" style="transform:scaleX(.945)">02/04/2026</span></div><div class="c" style="left:252.8px"><span class="sx" style="transform:scaleX(0.8741)">Khoa Chẩn đoán hình ảnh</span></div><div class="c" style="left:468.5px"><span class="sx" style="transform:scaleX(0.8852)">Bùi Thanh Mai</span></div><div class="c" style="left:622.8px"><span class="sx" style="transform:scaleX(0.8796)">Phòng Kế hoạch tổng hợp</span></div><div class="c" style="left:1459.4px"><span class="sx" style="transform:scaleX(0.8769)">Đã hoàn thành</span></div><div class="abs" style="left:1620px;top:4px;width:23px;height:23px;border-radius:12px;background:#fff"></div><div class="abs" style="left:1648.5px;top:4px;width:23px;height:23px;border-radius:12px;background:#fff"></div><svg class="abs" style="left:1625.8px;top:10.5px" width="12" height="12" viewBox="0 0 13 13" fill="none" stroke="#3355ee" stroke-width="1.150" stroke-linejoin="round" stroke-linecap="round"><path d="M3.300 6.100H2.300C1.400 6.100.800 6.700.800 7.600v2.800c0 .9.600 1.500 1.500 1.500h7.900c.9 0 1.500-.600 1.500-1.500V7.200"/><path d="M3.900 9.600 4.200 7 9.300 1.500c.5-.55 1.350-.55 1.900-.05s.6 1.350.1 1.900L6.200 8.800Z"/></svg>
<svg class="abs" style="left:1654.2px;top:9.3px" width="12" height="13" viewBox="0 0 13 14" fill="none" stroke="#e9502c" stroke-width="1.300" stroke-linejoin="round" stroke-linecap="round"><path d="M.900 3.900h11.200"/><path d="M4.100 3.700C4.100 2 5.100.900 6.500.900S8.900 2 8.900 3.700"/><path d="M1.900 4.100l.3 7.100c.1 1.200.8 1.900 2 1.900h4.600c1.200 0 1.900-.7 2-1.900l.3-7.100"/><path d="M5.100 6.600v3.800M7.900 6.600v3.800"/></svg>
<div class="hl" style="left:0;top:31px;width:1694px"></div></div>
<div class="row" style="top:345px;height:31px;line-height:31.5px;overflow:hidden"><div class="cb" style="left:8px;top:8px"></div><div class="c" style="left:38.5px"><span class="sx" style="transform:scaleX(0.9261)">071</span></div><div class="c" style="left:145.5px;width:98px;text-align:center"><span class="sxc" style="transform:scaleX(.945)">02/04/2026</span></div><div class="c" style="left:252.8px"><span class="sx" style="transform:scaleX(0.8741)">Khoa Chẩn đoán hình ảnh</span></div><div class="c" style="left:468.5px"><span class="sx" style="transform:scaleX(0.8813)">Phạm Thu Hiền</span></div><div class="c" style="left:622.8px"><span class="sx" style="transform:scaleX(0.8852)">Bùi Thanh Mai</span></div><div class="c" style="left:1459.4px"><span class="sx" style="transform:scaleX(0.8722)">Chưa hoàn thành</span></div><svg class="abs" style="left:1625.8px;top:10.5px" width="12" height="12" viewBox="0 0 13 13" fill="none" stroke="#3355ee" stroke-width="1.150" stroke-linejoin="round" stroke-linecap="round"><path d="M3.300 6.100H2.300C1.400 6.100.800 6.700.800 7.600v2.800c0 .9.600 1.500 1.500 1.500h7.900c.9 0 1.500-.600 1.500-1.500V7.200"/><path d="M3.900 9.600 4.200 7 9.300 1.500c.5-.55 1.350-.55 1.900-.05s.6 1.350.1 1.900L6.200 8.800Z"/></svg>
<svg class="abs" style="left:1654.2px;top:9.3px" width="12" height="13" viewBox="0 0 13 14" fill="none" stroke="#e9502c" stroke-width="1.300" stroke-linejoin="round" stroke-linecap="round"><path d="M.900 3.900h11.200"/><path d="M4.100 3.700C4.100 2 5.100.900 6.500.900S8.900 2 8.900 3.700"/><path d="M1.900 4.100l.3 7.100c.1 1.200.8 1.900 2 1.900h4.600c1.200 0 1.900-.7 2-1.900l.3-7.100"/><path d="M5.100 6.600v3.800M7.900 6.600v3.800"/></svg>
<div class="hl" style="left:0;top:30px;width:1694px"></div></div>
<div class="row" style="top:376px;height:32px;line-height:31.5px;overflow:hidden"><div class="cb" style="left:8px;top:9px"></div><div class="c" style="left:38.5px"><span class="sx" style="transform:scaleX(0.9261)">071</span></div><div class="c" style="left:145.5px;width:98px;text-align:center"><span class="sxc" style="transform:scaleX(.945)">02/04/2026</span></div><div class="c" style="left:252.8px"><span class="sx" style="transform:scaleX(0.8741)">Khoa Chẩn đoán hình ảnh</span></div><div class="c" style="left:468.5px"><span class="sx" style="transform:scaleX(0.8852)">Bùi Thanh Mai</span></div><div class="c" style="left:622.8px"><span class="sx" style="transform:scaleX(0.8796)">Phòng Kế hoạch tổng hợp</span></div><div class="c" style="left:1459.4px"><span class="sx" style="transform:scaleX(0.8769)">Đã hoàn thành</span></div><svg class="abs" style="left:1625.8px;top:10.5px" width="12" height="12" viewBox="0 0 13 13" fill="none" stroke="#3355ee" stroke-width="1.150" stroke-linejoin="round" stroke-linecap="round"><path d="M3.300 6.100H2.300C1.400 6.100.800 6.700.800 7.600v2.800c0 .9.600 1.500 1.500 1.500h7.900c.9 0 1.500-.600 1.500-1.500V7.200"/><path d="M3.900 9.600 4.200 7 9.300 1.500c.5-.55 1.350-.55 1.900-.05s.6 1.350.1 1.900L6.200 8.800Z"/></svg>
<svg class="abs" style="left:1654.2px;top:9.3px" width="12" height="13" viewBox="0 0 13 14" fill="none" stroke="#e9502c" stroke-width="1.300" stroke-linejoin="round" stroke-linecap="round"><path d="M.900 3.900h11.200"/><path d="M4.100 3.700C4.100 2 5.100.900 6.500.900S8.900 2 8.900 3.700"/><path d="M1.900 4.100l.3 7.100c.1 1.200.8 1.900 2 1.900h4.600c1.200 0 1.900-.7 2-1.900l.3-7.100"/><path d="M5.100 6.600v3.800M7.900 6.600v3.800"/></svg>
<div class="hl" style="left:0;top:31px;width:1694px"></div></div>
<div class="row" style="top:408px;height:31px;line-height:31.5px;overflow:hidden"><div class="cb" style="left:8px;top:8px"></div><div class="c" style="left:38.5px"><span class="sx" style="transform:scaleX(0.9353)">070</span></div><div class="c" style="left:145.5px;width:98px;text-align:center"><span class="sxc" style="transform:scaleX(.945)">01/04/2026</span></div><div class="c" style="left:252.8px"><span class="sx" style="transform:scaleX(0.8796)">Phòng Kế hoạch tổng hợp</span></div><div class="c" style="left:838.5px"><span class="sx" style="transform:scaleX(0.872)">Đã hoàn thành: <b class=g>1</b></span></div><div class="c" style="left:1459.4px"><span class="sx" style="transform:scaleX(0.8769)">Đã hoàn thành</span></div><svg class="abs" style="left:1625.8px;top:10.5px" width="12" height="12" viewBox="0 0 13 13" fill="none" stroke="#3355ee" stroke-width="1.150" stroke-linejoin="round" stroke-linecap="round"><path d="M3.300 6.100H2.300C1.400 6.100.800 6.700.800 7.600v2.800c0 .9.600 1.500 1.500 1.500h7.900c.9 0 1.500-.600 1.500-1.500V7.200"/><path d="M3.900 9.600 4.200 7 9.300 1.500c.5-.55 1.350-.55 1.900-.05s.6 1.350.1 1.900L6.200 8.800Z"/></svg>
<svg class="abs" style="left:1654.2px;top:9.3px" width="12" height="13" viewBox="0 0 13 14" fill="none" stroke="#e9502c" stroke-width="1.300" stroke-linejoin="round" stroke-linecap="round"><path d="M.900 3.900h11.200"/><path d="M4.100 3.700C4.100 2 5.100.900 6.500.900S8.900 2 8.900 3.700"/><path d="M1.900 4.100l.3 7.100c.1 1.200.8 1.900 2 1.900h4.600c1.200 0 1.900-.7 2-1.900l.3-7.100"/><path d="M5.100 6.600v3.800M7.900 6.600v3.800"/></svg>
<div class="hl" style="left:0;top:30px;width:1694px"></div></div>
<div class="row" style="top:439px;height:32px;line-height:31.5px;overflow:hidden"><div class="cb" style="left:8px;top:9px"></div><div class="c" style="left:38.5px"><span class="sx" style="transform:scaleX(0.9353)">069</span></div><div class="c" style="left:145.5px;width:98px;text-align:center"><span class="sxc" style="transform:scaleX(.945)">01/04/2026</span></div><div class="c" style="left:252.8px"><span class="sx" style="transform:scaleX(0.8741)">Khoa Chẩn đoán hình ảnh</span></div><div class="c" style="left:468.5px"><span class="sx" style="transform:scaleX(0.8852)">Bùi Thanh Mai</span></div><div class="c" style="left:622.8px"><span class="sx" style="transform:scaleX(0.8796)">Phòng Kế hoạch tổng hợp</span></div><div class="c" style="left:1459.4px"><span class="sx" style="transform:scaleX(0.8769)">Đã hoàn thành</span></div><svg class="abs" style="left:1625.8px;top:10.5px" width="12" height="12" viewBox="0 0 13 13" fill="none" stroke="#3355ee" stroke-width="1.150" stroke-linejoin="round" stroke-linecap="round"><path d="M3.300 6.100H2.300C1.400 6.100.800 6.700.800 7.600v2.800c0 .9.600 1.500 1.500 1.500h7.900c.9 0 1.500-.600 1.500-1.500V7.200"/><path d="M3.900 9.600 4.200 7 9.300 1.500c.5-.55 1.350-.55 1.900-.05s.6 1.350.1 1.900L6.200 8.800Z"/></svg>
<svg class="abs" style="left:1654.2px;top:9.3px" width="12" height="13" viewBox="0 0 13 14" fill="none" stroke="#e9502c" stroke-width="1.300" stroke-linejoin="round" stroke-linecap="round"><path d="M.900 3.900h11.200"/><path d="M4.100 3.700C4.100 2 5.100.900 6.500.900S8.900 2 8.900 3.700"/><path d="M1.900 4.100l.3 7.100c.1 1.200.8 1.900 2 1.900h4.600c1.200 0 1.900-.7 2-1.900l.3-7.100"/><path d="M5.100 6.600v3.800M7.900 6.600v3.800"/></svg>
<div class="hl" style="left:0;top:31px;width:1694px"></div></div>
<div class="row" style="top:471px;height:31px;line-height:31.5px;overflow:hidden"><div class="cb" style="left:8px;top:8px"></div><div class="c" style="left:38.5px"><span class="sx" style="transform:scaleX(0.9353)">066</span></div><div class="c" style="left:145.5px;width:98px;text-align:center"><span class="sxc" style="transform:scaleX(.945)">01/04/2026</span></div><div class="c" style="left:252.8px"><span class="sx" style="transform:scaleX(0.871)">Phòng PCN12</span></div><div class="c" style="left:468.5px"><span class="sx" style="transform:scaleX(0.8797)">Nguyễn Ngọc Diệp</span></div><div class="c" style="left:622.8px"><span class="sx" style="transform:scaleX(0.8796)">Phòng Kế hoạch tổng hợp</span></div><div class="c" style="left:838.5px"><span class="sx" style="transform:scaleX(0.8771)">Đã hoàn thành: <b class=g>2</b></span></div><div class="c" style="left:1459.4px"><span class="sx" style="transform:scaleX(0.8769)">Đã hoàn thành</span></div><svg class="abs" style="left:1625.8px;top:10.5px" width="12" height="12" viewBox="0 0 13 13" fill="none" stroke="#3355ee" stroke-width="1.150" stroke-linejoin="round" stroke-linecap="round"><path d="M3.300 6.100H2.300C1.400 6.100.800 6.700.800 7.600v2.800c0 .9.600 1.500 1.500 1.500h7.900c.9 0 1.500-.600 1.500-1.500V7.200"/><path d="M3.900 9.600 4.200 7 9.300 1.500c.5-.55 1.350-.55 1.900-.05s.6 1.350.1 1.900L6.200 8.800Z"/></svg>
<svg class="abs" style="left:1654.2px;top:9.3px" width="12" height="13" viewBox="0 0 13 14" fill="none" stroke="#e9502c" stroke-width="1.300" stroke-linejoin="round" stroke-linecap="round"><path d="M.900 3.900h11.200"/><path d="M4.100 3.700C4.100 2 5.100.900 6.500.900S8.900 2 8.900 3.700"/><path d="M1.900 4.100l.3 7.100c.1 1.200.8 1.900 2 1.900h4.600c1.200 0 1.900-.7 2-1.900l.3-7.100"/><path d="M5.100 6.600v3.800M7.900 6.600v3.800"/></svg>
<div class="hl" style="left:0;top:30px;width:1694px"></div></div>
<div class="row" style="top:502px;height:32px;line-height:31.5px;overflow:hidden"><div class="cb" style="left:8px;top:9px"></div><div class="c" style="left:38.5px"><span class="sx" style="transform:scaleX(0.9353)">074</span></div><div class="c" style="left:145.5px;width:98px;text-align:center"><span class="sxc" style="transform:scaleX(.945)">02/04/2026</span></div><div class="c" style="left:252.8px"><span class="sx" style="transform:scaleX(0.8753)">Trung tâm Tai Mũi Họng và Phẫu thuậ…</span></div><div class="c" style="left:468.5px"><span class="sx" style="transform:scaleX(0.8797)">Nguyễn Ngọc Diệp</span></div><div class="c" style="left:622.8px"><span class="sx" style="transform:scaleX(0.8796)">Phòng Kế hoạch tổng hợp</span></div><div class="c" style="left:838.5px"><span class="sx" style="transform:scaleX(0.872)">Đã hoàn thành: <b class=g>1</b></span></div><div class="c" style="left:1459.4px"><span class="sx" style="transform:scaleX(0.8769)">Đã hoàn thành</span></div><svg class="abs" style="left:1625.8px;top:10.5px" width="12" height="12" viewBox="0 0 13 13" fill="none" stroke="#3355ee" stroke-width="1.150" stroke-linejoin="round" stroke-linecap="round"><path d="M3.300 6.100H2.300C1.400 6.100.800 6.700.800 7.600v2.800c0 .9.600 1.500 1.500 1.500h7.900c.9 0 1.500-.600 1.500-1.500V7.200"/><path d="M3.900 9.600 4.200 7 9.300 1.500c.5-.55 1.350-.55 1.900-.05s.6 1.350.1 1.900L6.200 8.800Z"/></svg>
<svg class="abs" style="left:1654.2px;top:9.3px" width="12" height="13" viewBox="0 0 13 14" fill="none" stroke="#e9502c" stroke-width="1.300" stroke-linejoin="round" stroke-linecap="round"><path d="M.900 3.900h11.200"/><path d="M4.100 3.700C4.100 2 5.100.900 6.500.900S8.900 2 8.900 3.700"/><path d="M1.900 4.100l.3 7.100c.1 1.200.8 1.900 2 1.900h4.600c1.200 0 1.900-.7 2-1.900l.3-7.100"/><path d="M5.100 6.600v3.800M7.900 6.600v3.800"/></svg>
<div class="hl" style="left:0;top:31px;width:1694px"></div></div>
<div class="row" style="top:534px;height:31px;line-height:31.5px;overflow:hidden"><div class="cb" style="left:8px;top:8px"></div><div class="c" style="left:38.5px"><span class="sx" style="transform:scaleX(0.8779)">SC00003</span></div><div class="c" style="left:145.5px;width:98px;text-align:center"><span class="sxc" style="transform:scaleX(.945)">01/04/2026</span></div><div class="c" style="left:252.8px"><span class="sx" style="transform:scaleX(0.877)">Phòng Tài chính kế toán</span></div><div class="c" style="left:622.8px"><span class="sx" style="transform:scaleX(0.877)">Phòng Tài chính kế toán</span></div><div class="c" style="left:838.5px"><span class="sx" style="transform:scaleX(0.8589)">Chờ thực hiện: <b class=b>1</b></span></div><div class="c" style="left:933px"><span class="sx" style="transform:scaleX(0.885)">,</span></div><div class="c" style="left:947px"><span class="sx" style="transform:scaleX(0.8718)">Đang thực hiện: <b class=o>1</b>,</span></div><div class="c" style="left:1052.5px"><span class="sx" style="transform:scaleX(0.869)">Đã hoàn thành: <b class=g>1</b></span></div><div class="c" style="left:1459.4px"><span class="sx" style="transform:scaleX(0.8722)">Chưa hoàn thành</span></div><svg class="abs" style="left:1625.8px;top:10.5px" width="12" height="12" viewBox="0 0 13 13" fill="none" stroke="#3355ee" stroke-width="1.150" stroke-linejoin="round" stroke-linecap="round"><path d="M3.300 6.100H2.300C1.400 6.100.800 6.700.800 7.600v2.800c0 .9.600 1.500 1.500 1.500h7.900c.9 0 1.500-.600 1.500-1.500V7.200"/><path d="M3.900 9.600 4.200 7 9.300 1.500c.5-.55 1.350-.55 1.900-.05s.6 1.350.1 1.900L6.200 8.800Z"/></svg>
<svg class="abs" style="left:1654.2px;top:9.3px" width="12" height="13" viewBox="0 0 13 14" fill="none" stroke="#e9502c" stroke-width="1.300" stroke-linejoin="round" stroke-linecap="round"><path d="M.900 3.900h11.200"/><path d="M4.100 3.700C4.100 2 5.100.900 6.500.900S8.900 2 8.900 3.700"/><path d="M1.900 4.100l.3 7.100c.1 1.200.8 1.900 2 1.900h4.600c1.200 0 1.900-.7 2-1.900l.3-7.100"/><path d="M5.100 6.600v3.800M7.900 6.600v3.800"/></svg>
<div class="hl" style="left:0;top:30px;width:1694px"></div></div>
<div class="row" style="top:565px;height:32px;line-height:31.5px;overflow:hidden"><div class="cb" style="left:8px;top:9px"></div><div class="c" style="left:38.5px"><span class="sx" style="transform:scaleX(0.8779)">SC00002</span></div><div class="c" style="left:145.5px;width:98px;text-align:center"><span class="sxc" style="transform:scaleX(.945)">01/04/2026</span></div><div class="c" style="left:252.8px"><span class="sx" style="transform:scaleX(0.877)">Phòng Tài chính kế toán</span></div><div class="c" style="left:622.8px"><span class="sx" style="transform:scaleX(0.8825)">Ban Giám đốc</span></div><div class="c" style="left:838.5px"><span class="sx" style="transform:scaleX(0.872)">Đã hoàn thành: <b class=g>1</b></span></div><div class="c" style="left:1459.4px"><span class="sx" style="transform:scaleX(0.8769)">Đã hoàn thành</span></div><svg class="abs" style="left:1625.8px;top:10.5px" width="12" height="12" viewBox="0 0 13 13" fill="none" stroke="#3355ee" stroke-width="1.150" stroke-linejoin="round" stroke-linecap="round"><path d="M3.300 6.100H2.300C1.400 6.100.800 6.700.800 7.600v2.800c0 .9.600 1.500 1.500 1.500h7.900c.9 0 1.500-.600 1.500-1.500V7.200"/><path d="M3.900 9.600 4.200 7 9.300 1.500c.5-.55 1.350-.55 1.900-.05s.6 1.350.1 1.900L6.200 8.800Z"/></svg>
<svg class="abs" style="left:1654.2px;top:9.3px" width="12" height="13" viewBox="0 0 13 14" fill="none" stroke="#e9502c" stroke-width="1.300" stroke-linejoin="round" stroke-linecap="round"><path d="M.900 3.900h11.200"/><path d="M4.100 3.700C4.100 2 5.100.900 6.500.900S8.900 2 8.900 3.700"/><path d="M1.900 4.100l.3 7.100c.1 1.200.8 1.900 2 1.900h4.600c1.200 0 1.900-.7 2-1.900l.3-7.100"/><path d="M5.100 6.600v3.800M7.900 6.600v3.800"/></svg>
<div class="hl" style="left:0;top:31px;width:1694px"></div></div>
<div class="row" style="top:597px;height:31px;line-height:31.5px;overflow:hidden"><div class="cb" style="left:8px;top:8px"></div><div class="c" style="left:38.5px"><span class="sx" style="transform:scaleX(0.9353)">064</span></div><div class="c" style="left:145.5px;width:98px;text-align:center"><span class="sxc" style="transform:scaleX(.945)">30/03/2026</span></div><div class="c" style="left:252.8px"><span class="sx" style="transform:scaleX(0.8704)">Khoa Khám bệnh cơ sở Quang Trung</span></div><div class="c" style="left:468.5px"><span class="sx" style="transform:scaleX(0.8822)">Phạm Xuân Hiệp</span></div><div class="c" style="left:838.5px"><span class="sx" style="transform:scaleX(0.872)">Đã hoàn thành: <b class=g>1</b></span></div><div class="c" style="left:1459.4px"><span class="sx" style="transform:scaleX(0.8769)">Đã hoàn thành</span></div><svg class="abs" style="left:1625.8px;top:10.5px" width="12" height="12" viewBox="0 0 13 13" fill="none" stroke="#3355ee" stroke-width="1.150" stroke-linejoin="round" stroke-linecap="round"><path d="M3.300 6.100H2.300C1.400 6.100.800 6.700.800 7.600v2.800c0 .9.600 1.500 1.500 1.500h7.900c.9 0 1.500-.600 1.500-1.500V7.200"/><path d="M3.900 9.600 4.200 7 9.300 1.500c.5-.55 1.350-.55 1.900-.05s.6 1.350.1 1.900L6.200 8.800Z"/></svg>
<svg class="abs" style="left:1654.2px;top:9.3px" width="12" height="13" viewBox="0 0 13 14" fill="none" stroke="#e9502c" stroke-width="1.300" stroke-linejoin="round" stroke-linecap="round"><path d="M.900 3.900h11.200"/><path d="M4.100 3.700C4.100 2 5.100.900 6.500.900S8.900 2 8.900 3.700"/><path d="M1.900 4.100l.3 7.100c.1 1.200.8 1.900 2 1.900h4.600c1.200 0 1.900-.7 2-1.900l.3-7.100"/><path d="M5.100 6.600v3.800M7.900 6.600v3.800"/></svg>
<div class="hl" style="left:0;top:30px;width:1694px"></div></div>
<div class="row" style="top:628px;height:32px;line-height:31.5px;overflow:hidden"><div class="cb" style="left:8px;top:9px"></div><div class="c" style="left:38.5px"><span class="sx" style="transform:scaleX(0.9353)">062</span></div><div class="c" style="left:145.5px;width:98px;text-align:center"><span class="sxc" style="transform:scaleX(.945)">30/03/2026</span></div><div class="c" style="left:252.8px"><span class="sx" style="transform:scaleX(0.8817)">Khoa Điều trị theo yêu cầu</span></div><div class="c" style="left:468.5px"><span class="sx" style="transform:scaleX(0.8822)">Phạm Xuân Hiệp</span></div><div class="c" style="left:622.8px"><span class="sx" style="transform:scaleX(0.8796)">Phòng Kế hoạch tổng hợp</span></div><div class="c" style="left:838.5px"><span class="sx" style="transform:scaleX(0.872)">Đã hoàn thành: <b class=g>1</b></span></div><div class="c" style="left:1459.4px"><span class="sx" style="transform:scaleX(0.8769)">Đã hoàn thành</span></div><svg class="abs" style="left:1625.8px;top:10.5px" width="12" height="12" viewBox="0 0 13 13" fill="none" stroke="#3355ee" stroke-width="1.150" stroke-linejoin="round" stroke-linecap="round"><path d="M3.300 6.100H2.300C1.400 6.100.800 6.700.800 7.600v2.800c0 .9.600 1.500 1.500 1.500h7.900c.9 0 1.500-.600 1.500-1.500V7.200"/><path d="M3.900 9.600 4.200 7 9.300 1.500c.5-.55 1.350-.55 1.900-.05s.6 1.350.1 1.900L6.200 8.800Z"/></svg>
<svg class="abs" style="left:1654.2px;top:9.3px" width="12" height="13" viewBox="0 0 13 14" fill="none" stroke="#e9502c" stroke-width="1.300" stroke-linejoin="round" stroke-linecap="round"><path d="M.900 3.900h11.200"/><path d="M4.100 3.700C4.100 2 5.100.900 6.500.900S8.900 2 8.900 3.700"/><path d="M1.900 4.100l.3 7.100c.1 1.200.8 1.900 2 1.900h4.600c1.200 0 1.900-.7 2-1.900l.3-7.100"/><path d="M5.100 6.600v3.800M7.900 6.600v3.800"/></svg>
<div class="hl" style="left:0;top:31px;width:1694px"></div></div>
<div class="row" style="top:660px;height:21px;line-height:31.5px;overflow:hidden"><div class="cb" style="left:8px;top:9px"></div><div class="c" style="left:38.5px"><span class="sx" style="transform:scaleX(0.9261)">061</span></div><div class="c" style="left:145.5px;width:98px;text-align:center"><span class="sxc" style="transform:scaleX(.945)">12/02/2026</span></div><div class="c" style="left:468.5px"><span class="sx" style="transform:scaleX(0.8764)">Nguyễn Tuấn Tùng</span></div><div class="c" style="left:1459.4px"><span class="sx" style="transform:scaleX(0.8769)">Đã hoàn thành</span></div><svg class="abs" style="left:1625.8px;top:10.5px" width="12" height="12" viewBox="0 0 13 13" fill="none" stroke="#3355ee" stroke-width="1.150" stroke-linejoin="round" stroke-linecap="round"><path d="M3.300 6.100H2.300C1.400 6.100.800 6.700.800 7.600v2.800c0 .9.600 1.500 1.500 1.500h7.900c.9 0 1.500-.600 1.500-1.500V7.200"/><path d="M3.900 9.600 4.200 7 9.300 1.500c.5-.55 1.350-.55 1.900-.05s.6 1.350.1 1.900L6.200 8.800Z"/></svg>
<svg class="abs" style="left:1654.2px;top:9.3px" width="12" height="13" viewBox="0 0 13 14" fill="none" stroke="#e9502c" stroke-width="1.300" stroke-linejoin="round" stroke-linecap="round"><path d="M.900 3.900h11.200"/><path d="M4.100 3.700C4.100 2 5.100.900 6.500.900S8.900 2 8.900 3.700"/><path d="M1.900 4.100l.3 7.100c.1 1.200.8 1.900 2 1.900h4.600c1.200 0 1.900-.7 2-1.900l.3-7.100"/><path d="M5.100 6.600v3.800M7.900 6.600v3.800"/></svg>
<div class="hl" style="left:0;top:31px;width:1694px"></div></div>
<div class="abs" style="left:457px;top:625px;width:1202px;height:55px;background:linear-gradient(180deg,#fff,#f7f8fc);mix-blend-mode:multiply"></div>
<div class="vl" style="left:243px;top:91px;height:64px"></div><div class="vl" style="left:358px;top:91px;height:64px"></div><div class="vl" style="left:456px;top:91px;height:64px"></div><div class="vl" style="left:672px;top:91px;height:64px"></div><div class="vl" style="left:826px;top:91px;height:64px"></div><div class="vl" style="left:1042px;top:91px;height:64px"></div><div class="vl" style="left:1659px;top:91px;height:64px"></div><div class="vl" style="left:1662px;top:91px;height:64px"></div><div class="vl" style="left:1814px;top:91px;height:64px"></div><div class="vl" style="left:242px;top:155px;height:525px"></div><div class="vl" style="left:357px;top:155px;height:525px"></div><div class="vl" style="left:456px;top:155px;height:525px"></div><div class="vl" style="left:672px;top:155px;height:525px"></div><div class="vl" style="left:826px;top:155px;height:525px"></div><div class="vl" style="left:1042px;top:155px;height:525px"></div><div class="vl" style="left:1659px;top:155px;height:525px"></div><div class="vl" style="left:1662px;top:155px;height:525px"></div><div class="vl" style="left:1814px;top:155px;height:525px"></div>
<!--DETAIL PANEL-->
<div class="abs" style="left:213px;top:681px;width:1694px;height:225px;background:#fff"></div>
<div class="abs" style="left:213px;top:680px;width:1694px;height:1px;background:#a6a6a6"></div>
<div class="abs" style="left:213px;top:682px;width:1694px;height:1px;background:#b9b9b9"></div>
<div class="abs" style="left:228.300px;top:684px;height:24px;line-height:24px;font-size:13px;color:#2b4eec;-webkit-text-stroke:.25px #2b4eec"><span class="sx" style="transform:scaleX(0.9194)">Thông tin chi tiết</span></div>
<div class="abs" style="left:228px;top:710px;width:88px;height:1px;background:#2f54eb"></div>
<svg class="abs" style="left:1881px;top:689px" width="17" height="17" viewBox="0 0 17 17"><circle cx="8.500" cy="8.500" r="8.400" fill="#e1e2e8"/><path d="M4.600 6.800 8.500 10.600l3.900-3.800" fill="none" stroke="#2446e8" stroke-width="1.600" stroke-linecap="round" stroke-linejoin="round"/></svg>
<div class="abs" style="left:214px;top:712px;width:1690px;height:32px;background:#f5f5f5"></div>
<div class="hl" style="left:214px;top:744px;width:1690px"></div>
<div class="hl" style="left:214px;top:775px;width:1690px"></div>
<div class="vl" style="left:267px;top:712px;height:64px"></div><div class="vl" style="left:382px;top:712px;height:64px"></div><div class="vl" style="left:670px;top:712px;height:64px"></div><div class="vl" style="left:940px;top:712px;height:64px"></div><div class="vl" style="left:1210px;top:712px;height:64px"></div><div class="vl" style="left:1480px;top:712px;height:64px"></div><div class="vl" style="left:1903px;top:712px;height:64px"></div>
<div class="abs" style="left:230.0px;top:712px;height:31px;line-height:30px;font-size:12px;font-weight:bold;color:#1a1a1a;-webkit-text-stroke:.2px #1a1a1a;white-space:nowrap"><span class="sx" style="transform:scaleX(0.9263)">STT</span></div>
<div class="abs" style="left:277.0px;top:712px;height:31px;line-height:30px;font-size:12px;font-weight:bold;color:#1a1a1a;-webkit-text-stroke:.2px #1a1a1a;white-space:nowrap"><span class="sx" style="transform:scaleX(0.9299)">Mã tài sản/CCDC</span></div>
<div class="abs" style="left:391.7px;top:712px;height:31px;line-height:30px;font-size:12px;font-weight:bold;color:#1a1a1a;-webkit-text-stroke:.2px #1a1a1a;white-space:nowrap"><span class="sx" style="transform:scaleX(0.9197)">Tên tài sản/CCDC</span></div>
<div class="abs" style="left:680.0px;top:712px;height:31px;line-height:30px;font-size:12px;font-weight:bold;color:#1a1a1a;-webkit-text-stroke:.2px #1a1a1a;white-space:nowrap"><span class="sx" style="transform:scaleX(0.8911)">Tình trạng trước sửa chữa</span></div>
<div class="abs" style="left:949.7px;top:712px;height:31px;line-height:30px;font-size:12px;font-weight:bold;color:#1a1a1a;-webkit-text-stroke:.2px #1a1a1a;white-space:nowrap"><span class="sx" style="transform:scaleX(0.9047)">Nguyên nhân hỏng</span></div>
<div class="abs" style="left:1219.7px;top:712px;height:31px;line-height:30px;font-size:12px;font-weight:bold;color:#1a1a1a;-webkit-text-stroke:.2px #1a1a1a;white-space:nowrap"><span class="sx" style="transform:scaleX(0.8807)">Phương án sửa chữa</span></div>
<div class="abs" style="left:1490.0px;top:712px;height:31px;line-height:30px;font-size:12px;font-weight:bold;color:#1a1a1a;-webkit-text-stroke:.2px #1a1a1a;white-space:nowrap"><span class="sx" style="transform:scaleX(0.9002)">Tình trạng sau sửa chữa</span></div>
<div class="abs" style="left:237.0px;top:745px;height:30px;line-height:30px;color:#1c1c1c;-webkit-text-stroke:.28px #1c1c1c;white-space:nowrap"><span class="sx" style="transform:scaleX(0.8294)">1</span></div>
<div class="abs" style="left:277.0px;top:745px;height:30px;line-height:30px;color:#1c1c1c;-webkit-text-stroke:.28px #1c1c1c;white-space:nowrap"><span class="sx" style="transform:scaleX(0.8717)">TS002017</span></div>
<div class="abs" style="left:391.7px;top:745px;height:30px;line-height:30px;color:#1c1c1c;-webkit-text-stroke:.28px #1c1c1c;white-space:nowrap"><span class="sx" style="transform:scaleX(0.9112)">HHTest003</span></div>
<div class="abs" style="left:680.0px;top:745px;height:30px;line-height:30px;color:#1c1c1c;-webkit-text-stroke:.28px #1c1c1c;white-space:nowrap"><span class="sx" style="transform:scaleX(0.8879)">A</span></div>
<div class="abs" style="left:949.7px;top:745px;height:30px;line-height:30px;color:#1c1c1c;-webkit-text-stroke:.28px #1c1c1c;white-space:nowrap"><span class="sx" style="transform:scaleX(0.8879)">A</span></div>
<div class="abs" style="left:1219.7px;top:745px;height:30px;line-height:30px;color:#1c1c1c;-webkit-text-stroke:.28px #1c1c1c;white-space:nowrap"><span class="sx" style="transform:scaleX(0.8879)">A</span></div>
<div class="hl" style="left:213px;top:873px;width:1694px"></div>
<div class="abs" style="left:222.700px;top:877px;height:25px;line-height:25px;color:#1c1c1c;-webkit-text-stroke:.28px #1c1c1c;white-space:nowrap"><span class="sx" style="transform:scaleX(0.8876)">Tổng số: <b>1</b> bản ghi</span></div>
<div class="abs" style="left:1665.700px;top:877px;height:25px;line-height:25px;color:#1c1c1c;-webkit-text-stroke:.28px #1c1c1c;white-space:nowrap"><span class="sx" style="transform:scaleX(0.901)">Số dòng/trang</span></div>
<div class="abs" style="left:1749.300px;top:877.500px;height:25px;line-height:25px;color:#111;-webkit-text-stroke:.28px #111;white-space:nowrap"><span class="sx" style="transform:scaleX(0.93)">20</span></div>
<svg class="abs" style="left:1774px;top:885.500px" width="10" height="7" viewBox="0 0 10 7" fill="none" stroke="#111" stroke-width="2.100"><path d="M.8 1 5 5.300 9.200 1"/></svg>
<div class="abs" style="left:1813px;top:877.500px;height:25px;line-height:25px;color:#9a9a9a;font-size:11px;white-space:nowrap"><span class="sx" style="transform:scaleX(0.9)">&lt;</span></div>
<div class="abs" style="left:1828.300px;top:877px;height:25px;line-height:25px;color:#1c1c1c;-webkit-text-stroke:.28px #1c1c1c;white-space:nowrap"><span class="sx" style="transform:scaleX(0.8661)">Trang</span></div>
<div class="abs" style="left:1872px;top:877px;height:25px;line-height:25px;color:#111;font-weight:bold;white-space:nowrap"><span class="sx" style="transform:scaleX(0.9)">1</span></div>
<div class="abs" style="left:1891.500px;top:877.500px;height:25px;line-height:25px;color:#9a9a9a;font-size:11px;white-space:nowrap"><span class="sx" style="transform:scaleX(0.9)">&gt;</span></div>
<!--FLOATING WIDGETS-->
<div class="abs" style="left:1909px;top:700px;width:11px;height:219px;background:linear-gradient(90deg,rgba(70,70,80,0) 0,rgba(70,70,80,.13) 45%,rgba(60,60,70,.46) 100%);-webkit-mask-image:linear-gradient(180deg,transparent 0,#000 41%,#000 76%,transparent 93%);mask-image:linear-gradient(180deg,transparent 0,#000 41%,#000 76%,transparent 93%)"></div>
<div class="abs" style="left:1907px;top:332px;width:13px;height:14px;background:#2c4fec"></div>
<svg class="abs" style="left:1911px;top:335px" width="6" height="8" viewBox="0 0 6 8" fill="none" stroke="#fff" stroke-width="1.300"><path d="M1.200 1 4.500 4 1.200 7"/></svg>
<div class="abs" style="left:1871px;top:349px;width:49px;height:138px;background:#fff;border-radius:9px 0 0 9px;box-shadow:0 1px 5px rgba(30,30,60,.13)"></div>
<svg class="abs" style="left:1878px;top:357px" width="36" height="36" viewBox="0 0 36 36"><circle cx="18" cy="18" r="18" fill="#3151e6"/><g fill="#fff"><path d="M13.200 18.600 19.600 12.200l4.200 7.800-8.200 1.900Z"/><path d="M12.400 19.400l2.400 3.100-1.700 1.300c-.7.500-1.600.4-2.100-.3l-.3-.4c-.5-.7-.4-1.600.3-2.100Z"/><path d="M15.800 22.300l2.300 2.400-1.600 1-1.800-2.600Z"/></g><g stroke="#fff" stroke-width="1" stroke-linecap="round"><path d="M22.400 11.800l.9-2.300M23.800 13.200l2.300-1.500M24.300 15.200l2.400-.2"/></g></svg>
<svg class="abs" style="left:1878px;top:400px" width="36" height="36" viewBox="0 0 36 36"><defs><linearGradient id="gg" x1="0" y1="0" x2="0" y2="1"><stop offset="0" stop-color="#17c46a"/><stop offset="1" stop-color="#25a264"/></linearGradient></defs><circle cx="18" cy="18" r="18" fill="url(#gg)"/><circle cx="18" cy="18" r="17.600" fill="none" stroke="#3050c8" stroke-width=".600" opacity=".6"/><path d="M18 7.500c6.200 0 11 4.500 11 10.300s-4.800 10.300-11 10.300S7 23.600 7 17.800 11.800 7.500 18 7.500Z" fill="#fff"/><path d="M18 12.200c3.500 0 6.200 2.300 6.200 5.300 0 1.400-.6 2.600-1.600 3.600l.9 2.100-2.700-.9c-.9.300-1.800.5-2.800.5-3.500 0-6.200-2.300-6.200-5.300s2.700-5.300 6.200-5.300Z" fill="#1fb96a"/><circle cx="15.800" cy="17.600" r="1.200" fill="#fff"/><circle cx="20.200" cy="17.600" r="1.200" fill="#fff"/></svg>
<svg class="abs" style="left:1878px;top:443px" width="36" height="36" viewBox="0 0 36 36"><circle cx="18" cy="18" r="18" fill="#0b36c8"/><circle cx="9.800" cy="12" r="4.200" fill="#dfe9fb"/><circle cx="26.200" cy="12" r="4.200" fill="#dfe9fb"/><circle cx="9.800" cy="12" r="2.400" fill="#a9c4f2"/><circle cx="26.200" cy="12" r="2.400" fill="#a9c4f2"/><ellipse cx="18" cy="18.500" rx="12.500" ry="9.500" fill="#eef3fd"/><rect x="8.500" y="15.300" width="19" height="9.500" rx="4.700" fill="#0a1b6b"/><circle cx="13.500" cy="19.600" r="2" fill="#8fb6ff"/><circle cx="22.500" cy="19.600" r="2" fill="#8fb6ff"/><circle cx="13.500" cy="19.600" r=".900" fill="#0a1b6b"/><circle cx="22.500" cy="19.600" r=".900" fill="#0a1b6b"/><rect x="16.600" y="22" width="2.800" height="1.300" rx=".600" fill="#8fb6ff"/></svg>
<!--ANNOTATIONS-->
<div class="abs" style="left:8px;top:332px;width:188px;height:44px;border:4px solid #fa4040"></div>
<div class="abs" style="left:171px;top:363px;width:40px;height:40px;border-radius:20px;background:#fa4040;color:#fff;font-size:29px;line-height:42px;text-align:center;padding-left:2px;overflow:hidden">1</div>
<div class="abs" style="left:184px;top:390.3px;width:6.8px;height:5.4px;background:#fa4040"></div><div class="abs" style="left:194.2px;top:390.3px;width:6px;height:5.4px;background:#fa4040"></div>
<div class="abs" style="left:1762px;top:47px;width:120px;height:41px;border:4px solid #fa4040"></div>
<div class="abs" style="left:1742px;top:74px;width:40px;height:40px;border-radius:20px;background:#fa4040;color:#fff;font-size:30px;line-height:40px;text-align:center">2</div>
<div class="abs" style="left:0;top:0;width:1922px;height:1px;background:#000"></div>
<div class="abs" style="left:0;top:0;width:1px;height:921px;background:#000"></div>
<div class="abs" style="left:1921px;top:0;width:1px;height:921px;background:#000"></div>
<div class="abs" style="left:0;top:920px;width:1922px;height:1px;background:#000"></div>
</body></html>
